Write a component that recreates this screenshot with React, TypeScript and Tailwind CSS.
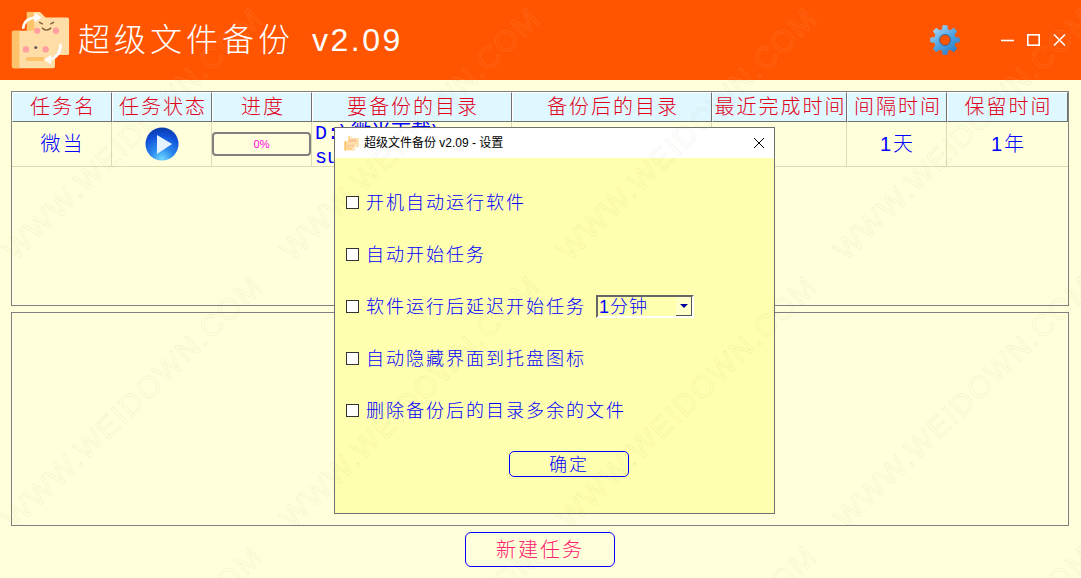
import React from "react";

const FONT = "font-['Liberation_Sans','Noto_Sans_CJK_SC',sans-serif]";

const columns = [
  { label: "任务名", w: "w-[100px]" },
  { label: "任务状态", w: "w-[100px]" },
  { label: "进度", w: "w-[100px]" },
  { label: "要备份的目录", w: "w-[200px]" },
  { label: "备份后的目录", w: "w-[200px]" },
  { label: "最近完成时间", w: "w-[135px]" },
  { label: "间隔时间", w: "w-[100px]" },
  { label: "保留时间", w: "w-[121px]" },
];

const options = [
  "开机自动运行软件",
  "自动开始任务",
  "软件运行后延迟开始任务",
  "自动隐藏界面到托盘图标",
  "删除备份后的目录多余的文件",
];

function gearPath(cx: number, cy: number, teeth: number, ro: number, ri: number) {
  const pts: string[] = [];
  const step = (Math.PI * 2) / teeth;
  for (let i = 0; i < teeth; i++) {
    const a = i * step - Math.PI / 2;
    const offs: [number, number][] = [
      [-0.36, ri],
      [-0.2, ro],
      [0.2, ro],
      [0.36, ri],
    ];
    for (const [o, r] of offs) {
      const t = a + o * step;
      pts.push(`${(cx + Math.cos(t) * r).toFixed(2)} ${(cy + Math.sin(t) * r).toFixed(2)}`);
    }
  }
  return "M" + pts.join("L") + "Z";
}

function Logo({ size }: { size: number }) {
  return (
    <svg width={size} height={size} viewBox="0 0 64 64" className="shrink-0">
      <path d="M18 2h14l6 6h23a2 2 0 0 1 2 2v36a2 2 0 0 1-2 2H18z" fill="#ffdda6" />
      <path d="M18 2h8v20h-8z" fill="#ffc46b" />
      <circle cx="29" cy="22" r="3.2" fill="#ff9f9f" />
      <circle cx="49" cy="22" r="3.4" fill="#ff9f9f" />
      <path d="M34 19q5 5 10 0" fill="none" stroke="#7a5a3a" strokeWidth="1.4" />
      <path d="M31 13l4 2M47 13l-4 2" fill="none" stroke="#7a5a3a" strokeWidth="1.4" />
      <path d="M2 24a2 2 0 0 1 2-2h14l5 4h23a2 2 0 0 1 2 2v32a2 2 0 0 1-2 2H4a2 2 0 0 1-2-2z" fill="#ffdda6" />
      <path d="M2 24a2 2 0 0 1 2-2h6v40H4a2 2 0 0 1-2-2z" fill="#ffc46b" />
      <circle cx="17" cy="42" r="3.4" fill="#ff9f9f" />
      <circle cx="38" cy="42" r="3.4" fill="#ff9f9f" />
      <circle cx="27.5" cy="40" r="1.6" fill="#6a5a5a" />
      <rect x="17" y="50" width="20" height="4.5" rx="2" fill="#ffc46b" />
      <path d="M14 20q1-11 13-12" fill="none" stroke="#fff" strokeWidth="2.8" />
      <path d="M26 3l8 5-8 5z" fill="#fff" />
      <path d="M54 36q0 14-12 17" fill="none" stroke="#fff" strokeWidth="2.8" />
      <path d="M44 48l-8 5 8 5z" fill="#fff" />
    </svg>
  );
}

function Gear() {
  return (
    <svg width="32" height="32" viewBox="0 0 32 32" className="shrink-0">
      <defs>
        <linearGradient id="gearFill" x1="0.1" y1="0.1" x2="0.8" y2="1">
          <stop offset="0" stopColor="#a5d6f7" />
          <stop offset="0.5" stopColor="#4fa3e3" />
          <stop offset="1" stopColor="#2a78c4" />
        </linearGradient>
      </defs>
      <path d={gearPath(16, 16, 8, 15, 11)} fill="url(#gearFill)" />
      <circle cx="16" cy="16" r="5.5" fill="#ff5500" />
      <circle cx="16" cy="16" r="5.5" fill="none" stroke="#1f5f9e" strokeWidth="0.8" />
    </svg>
  );
}

function PlayButton() {
  return (
    <svg width="34" height="34" viewBox="0 0 34 34">
      <defs>
        <radialGradient id="playFill" cx="0.5" cy="0.95" r="0.95">
          <stop offset="0" stopColor="#6fd8ff" />
          <stop offset="0.35" stopColor="#2b8bef" />
          <stop offset="0.75" stopColor="#1050d8" />
          <stop offset="1" stopColor="#0a3aa8" />
        </radialGradient>
      </defs>
      <circle cx="17" cy="17" r="16.5" fill="url(#playFill)" />
      <path d="M12 8l15 9-15 10z" fill="#e6f4ff" />
    </svg>
  );
}

function Watermark({ stroke, offsetY }: { stroke: string; offsetY: number }) {
  const xs = [-262, 15, 292, 569, 846, 1123];
  const ys = [-8, 262, 530, 800];
  return (
    <svg
      className="absolute left-0 top-0 pointer-events-none"
      width="1081"
      height="578"
      viewBox={`0 ${offsetY} 1081 578`}
    >
      {ys.map((y) =>
        xs.map((x) => (
          <text
            key={`${x}-${y}`}
            x={x}
            y={y}
            transform={`rotate(-44 ${x} ${y})`}
            textLength={346}
            lengthAdjust="spacing"
            fontFamily="'Liberation Sans', sans-serif"
            fontSize="30"
            fill="none"
            stroke={stroke}
            strokeWidth="1"
          >
            WWW.WEIDOWN.COM
          </text>
        ))
      )}
    </svg>
  );
}

function Dialog() {
  return (
    <div className="absolute left-[334px] top-[47px] w-[441px] h-[387px] border border-[#707070] bg-[#ffffb0] flex flex-col">
      <div className="h-[30px] bg-white flex items-center shrink-0">
        <span className="ml-[9px] mr-[5px]">
          <Logo size={15} />
        </span>
        <span className="text-[12px] text-black">超级文件备份 v2.09 - 设置</span>
        <svg width="12" height="12" viewBox="0 0 12 12" className="ml-auto mr-[9px]">
          <path d="M1 1l10 10M11 1L1 11" stroke="#000" strokeWidth="1" />
        </svg>
      </div>
      <div className="flex flex-col pt-[18px]">
        {options.map((text, i) => (
          <div key={text} className="h-[52px] flex items-center pl-[11px]">
            <span className="w-[13px] h-[13px] border border-[#333] bg-white shrink-0" />
            <span className="ml-[7px] pt-[2px] text-[18px] tracking-[2px] text-[#0000ff] font-light leading-none">
              {text}
            </span>
            {i === 2 && (
              <div className="ml-[10px] w-[98px] h-[23px] flex items-center justify-between border-2 border-t-[#666] border-l-[#666] border-r-white border-b-white">
                <span className="ml-[1px] pt-[2px] text-[18px] tracking-[1px] text-[#0000ff] font-light leading-none">1分钟</span>
                <span className="w-[16px] h-[19px] bg-[#ffffc8] border-r border-b border-[#555] flex items-center justify-center">
                  <span className="w-0 h-0 border-x-[4px] border-x-transparent border-t-[4px] border-t-[#0000a0]" />
                </span>
              </div>
            )}
          </div>
        ))}
        <button className="ml-[174px] mt-[15px] w-[120px] h-[26px] pt-[2px] rounded-[5px] border border-[#0000ff] text-[18px] tracking-[2px] text-[#0000ff] font-light leading-none">
          确定
        </button>
      </div>
    </div>
  );
}

export default function App() {
  return (
    <div className={`relative w-[1081px] h-[578px] overflow-hidden bg-[#ffffdc] flex flex-col ${FONT}`}>
      <header className="relative h-20 shrink-0 bg-[#ff5500] flex items-center overflow-hidden">
        <span className="ml-[10px]">
          <Logo size={60} />
        </span>
        <h1 className="ml-[8px] text-[32px] tracking-[4px] text-white font-light leading-none whitespace-pre">
          超级文件备份
          <span className="ml-[18px] tracking-[2.5px]">v2.09</span>
        </h1>
        <span className="ml-auto">
          <Gear />
        </span>
        <svg width="66" height="14" viewBox="0 0 66 14" className="ml-[40px] mr-[14px]">
          <path d="M0 7.5h13" stroke="#fff" strokeWidth="1.6" />
          <rect x="26.8" y="1.8" width="11.4" height="10.4" fill="none" stroke="#fff" strokeWidth="1.6" />
          <path d="M53 1.5l11 11M64 1.5l-11 11" stroke="#fff" strokeWidth="1.6" />
        </svg>
        <Watermark stroke="rgba(255,255,255,0.09)" offsetY={0} />
      </header>

      <main className="relative flex-1 flex flex-col pt-[11px] px-[11px]">
        <section className="h-[215px] w-[1058px] border border-[#808080] shrink-0">
          <div className="flex">
            {columns.map((c) => (
              <div
                key={c.label}
                className={`${c.w} h-[30px] pl-[2px] bg-[#dff8ff] border border-t-white border-l-white border-r-[#707070] border-b-[#707070] flex items-center justify-center text-[20px] tracking-[2px] text-[#e0001a] font-light leading-none whitespace-nowrap`}
              >
                {c.label}
              </div>
            ))}
          </div>
          <div className="flex h-[45px] border-b border-[#dcdcb4] text-[20px] tracking-[2px] text-[#0000ff] font-light">
            <div className="w-[100px] pl-[2px] border-r border-[#dcdcb4] flex items-center justify-center">微当</div>
            <div className="w-[100px] pl-[1px] border-r border-[#dcdcb4] flex items-center justify-center">
              <PlayButton />
            </div>
            <div className="w-[100px] border-r border-[#dcdcb4] flex items-center">
              <div className="w-[99px] h-[24px] rounded-[4px] border-2 border-[#808080] flex items-center justify-center text-[11px] tracking-normal text-[#ff00e0] font-normal">
                0%
              </div>
            </div>
            <div className="w-[200px] border-r border-[#dcdcb4] pl-[3px] font-['Liberation_Mono','Noto_Sans_CJK_SC',monospace] font-normal tracking-normal leading-[24px] overflow-hidden whitespace-nowrap">
              D:\微当下载\
              <br />
              su
            </div>
            <div className="w-[200px] border-r border-[#dcdcb4]" />
            <div className="w-[135px] border-r border-[#dcdcb4]" />
            <div className="w-[100px] pl-[2px] border-r border-[#dcdcb4] flex items-center justify-center">1天</div>
            <div className="w-[121px] pl-[2px] flex items-center justify-center">1年</div>
          </div>
        </section>

        <section className="mt-[6px] h-[214px] w-[1058px] border border-[#808080] shrink-0" />

        <button className="mt-[6px] self-center mr-[1px] w-[150px] h-[35px] rounded-[6px] border border-[#0000ff] text-[20px] tracking-[2px] text-[#ff2070] font-light leading-none">
          新建任务
        </button>

        <Dialog />
        <Watermark stroke="rgba(130,130,70,0.09)" offsetY={80} />
      </main>
    </div>
  );
}
